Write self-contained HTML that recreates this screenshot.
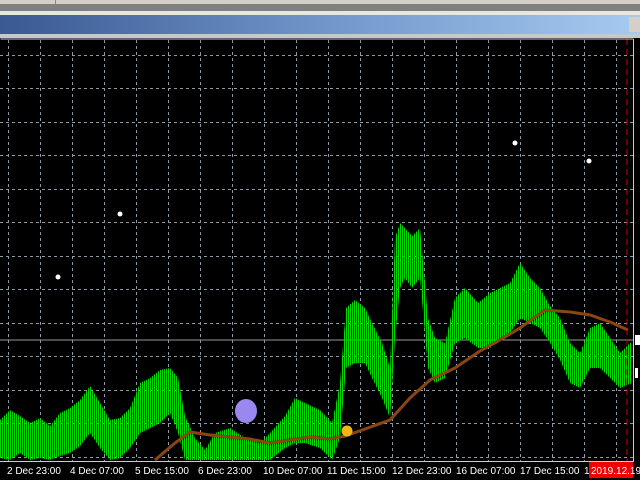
<!DOCTYPE html>
<html><head><style>
body{margin:0;width:640px;height:480px;overflow:hidden;background:#000;font-family:"Liberation Sans",sans-serif}
</style></head><body>
<div style="position:absolute;left:0;top:0;width:640px;height:4px;background:#d4d0c8"></div>
<div style="position:absolute;left:55px;top:0;width:1px;height:4px;background:#888"></div>
<div style="position:absolute;left:0;top:4px;width:640px;height:7px;background:#808080"></div>
<div style="position:absolute;left:0;top:11px;width:640px;height:4px;background:#e8e6e0"></div>
<div style="position:absolute;left:0;top:15px;width:640px;height:19px;background:linear-gradient(90deg,#3a5892,#6a8fc4 45%,#a6caf0)"></div>
<div style="position:absolute;left:629px;top:17px;width:11px;height:15px;background:#d4d0c8"></div>
<div style="position:absolute;left:0;top:34px;width:640px;height:4px;background:#c8c8c8"></div>
<svg width="640" height="442" style="position:absolute;left:0;top:38px" xmlns="http://www.w3.org/2000/svg">
<defs>
<pattern id="st" width="2" height="20" patternUnits="userSpaceOnUse"><rect x="0" y="0" width="1" height="20" fill="#00d800"/></pattern>
</defs>
<rect x="0" y="0" width="640" height="442" fill="#000"/>
<path fill="none" stroke="#8a9aa8" stroke-width="1" stroke-dasharray="3,3" shape-rendering="crispEdges" d="M8.5 2V423M40.5 2V423M72.5 2V423M104.5 2V423M136.5 2V423M168.5 2V423M200.5 2V423M232.5 2V423M264.5 2V423M296.5 2V423M328.5 2V423M360.5 2V423M392.5 2V423M424.5 2V423M456.5 2V423M488.5 2V423M520.5 2V423M552.5 2V423M584.5 2V423M616.5 2V423M0 17.5H633M0 50.5H633M0 84.5H633M0 117.5H633M0 151.5H633M0 184.5H633M0 218.5H633M0 251.5H633M0 285.5H633M0 318.5H633M0 352.5H633M0 385.5H633M0 419.5H633"/>
<line x1="0" y1="302" x2="633" y2="302" stroke="#9a9a9a"/>
<polygon fill="url(#st)" points="0,382 10,372 20,378 30,385 40,380 50,388 60,375 70,370 80,362 90,348 100,365 110,382 120,380 130,370 140,345 150,340 160,332 170,330 178,340 185,378 195,400 205,412 215,395 230,390 245,400 260,405 270,395 285,378 295,360 305,365 320,372 332,385 340,345 346,270 355,262 365,270 372,285 382,305 390,330 395,200 400,185 405,190 412,198 420,190 428,280 435,300 445,305 455,260 465,250 478,265 490,255 500,250 510,245 520,225 530,240 540,250 550,268 560,280 570,305 580,315 590,290 600,285 610,300 620,315 630,305 632,305 632,345 620,350 610,340 600,330 590,330 580,350 570,345 560,322 550,305 540,290 530,285 520,280 510,295 500,300 490,310 478,310 465,300 455,305 445,340 435,345 428,330 420,240 412,250 405,240 400,250 395,300 390,380 382,360 372,340 365,325 355,325 346,330 340,400 332,422 320,410 305,405 295,405 285,410 270,422 260,422 245,422 230,422 215,422 205,422 195,422 185,422 178,395 170,375 160,385 150,390 140,395 130,410 120,420 110,422 100,410 90,395 80,408 70,415 60,418 50,422 40,420 30,422 20,415 10,422 0,420"/>
<polyline fill="none" stroke="#8b4513" stroke-width="3" points="155,422 175,405 190,394 210,397 230,399 250,401 270,405 290,402 310,399 330,401 345,398 365,391 390,382 410,360 430,342 455,330 480,313 500,302 520,290 545,272 570,274 590,277 610,284 628,292"/>
<line x1="627" y1="1" x2="627" y2="423" stroke="#e00000" stroke-dasharray="6,4"/>
<line x1="0.5" y1="1" x2="633.5" y2="1" stroke="#ccc"/>
<line x1="633.5" y1="1" x2="633.5" y2="423" stroke="#ccc"/>
<line x1="0" y1="423.5" x2="634" y2="423.5" stroke="#ccc"/>
<rect x="635" y="297" width="5" height="10" fill="#fff"/>
<rect x="635" y="330" width="3" height="10" fill="#fff"/>
<circle cx="58" cy="239" r="2.5" fill="#fff"/>
<circle cx="120" cy="176" r="2.5" fill="#fff"/>
<circle cx="515" cy="105" r="2.5" fill="#fff"/>
<circle cx="589" cy="123" r="2.5" fill="#fff"/>
<ellipse cx="246" cy="373" rx="11" ry="12" fill="#9a88f0"/>
<circle cx="347" cy="393" r="5.5" fill="#f5b416"/>
<g font-size="10" fill="#fff" font-family="Liberation Sans,sans-serif">
<text x="7" y="436">2 Dec 23:00</text><text x="70" y="436">4 Dec 07:00</text>
<text x="135" y="436">5 Dec 15:00</text><text x="198" y="436">6 Dec 23:00</text>
<text x="263" y="436">10 Dec 07:00</text><text x="327" y="436">11 Dec 15:00</text>
<text x="392" y="436">12 Dec 23:00</text><text x="456" y="436">16 Dec 07:00</text>
<text x="520" y="436">17 Dec 15:00</text><text x="584" y="436">1</text>
</g>
<rect x="589" y="424" width="44" height="16" fill="#f00000"/>
<text x="591" y="436" font-size="10" fill="#fff" font-family="Liberation Sans,sans-serif">2019.12.19</text>
</svg>
</body></html>
